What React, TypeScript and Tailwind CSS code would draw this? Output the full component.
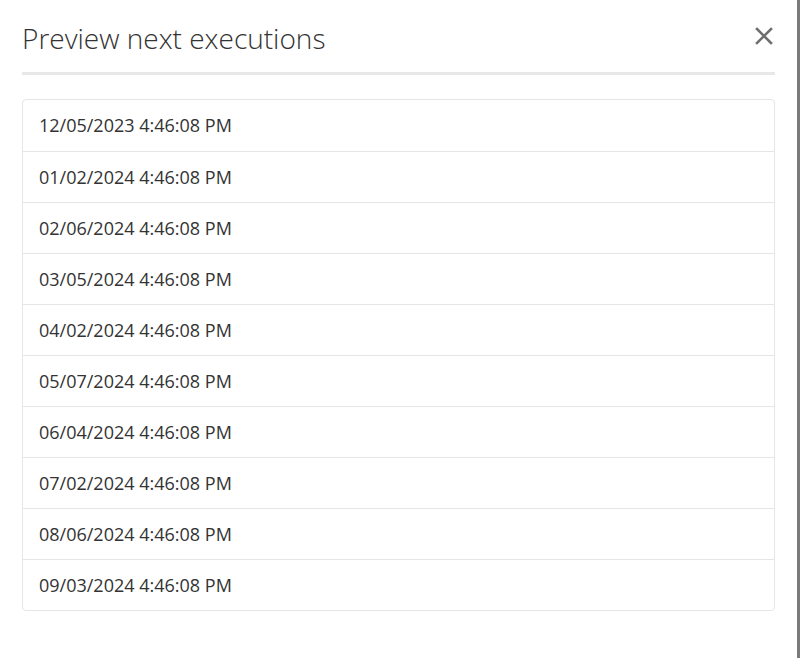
import React from "react";

const dates = [
  "12/05/2023 4:46:08 PM",
  "01/02/2024 4:46:08 PM",
  "02/06/2024 4:46:08 PM",
  "03/05/2024 4:46:08 PM",
  "04/02/2024 4:46:08 PM",
  "05/07/2024 4:46:08 PM",
  "06/04/2024 4:46:08 PM",
  "07/02/2024 4:46:08 PM",
  "08/06/2024 4:46:08 PM",
  "09/03/2024 4:46:08 PM",
];

export default function App() {
  return (
    <div className="flex h-[658px] w-[800px] bg-white" style={{ fontFamily: "'Open Sans', 'Noto Sans', sans-serif" }}>
      <div className="flex-1 px-[22px] pt-[18px]">
        <div className="flex items-start justify-between border-b-[3px] border-[#e8e8e8] pb-[14px]">
          <h1 className="text-[28px] font-light leading-[40px] text-[#333]">Preview next executions</h1>
          <button className="mr-[2px] mt-[9px] text-[#6f6f6f]" aria-label="close">
            <svg width="18" height="18" viewBox="0 0 18 18">
              <path d="M2 2 L16 16 M16 2 L2 16" stroke="currentColor" strokeWidth="2.6" strokeLinecap="square" />
            </svg>
          </button>
        </div>
        <div className="mt-[24px] rounded-[4px] border border-[#e6e6e6]">
          {dates.map((d, i) => (
            <div
              key={d}
              className={`flex h-[51px] items-center px-[16px] text-[18px] text-[#333] ${i > 0 ? "border-t border-[#e6e6e6]" : ""}`}
            >
              {d}
            </div>
          ))}
        </div>
      </div>
      <div className="w-[3px] bg-[#7a7a7a]" />
    </div>
  );
}
